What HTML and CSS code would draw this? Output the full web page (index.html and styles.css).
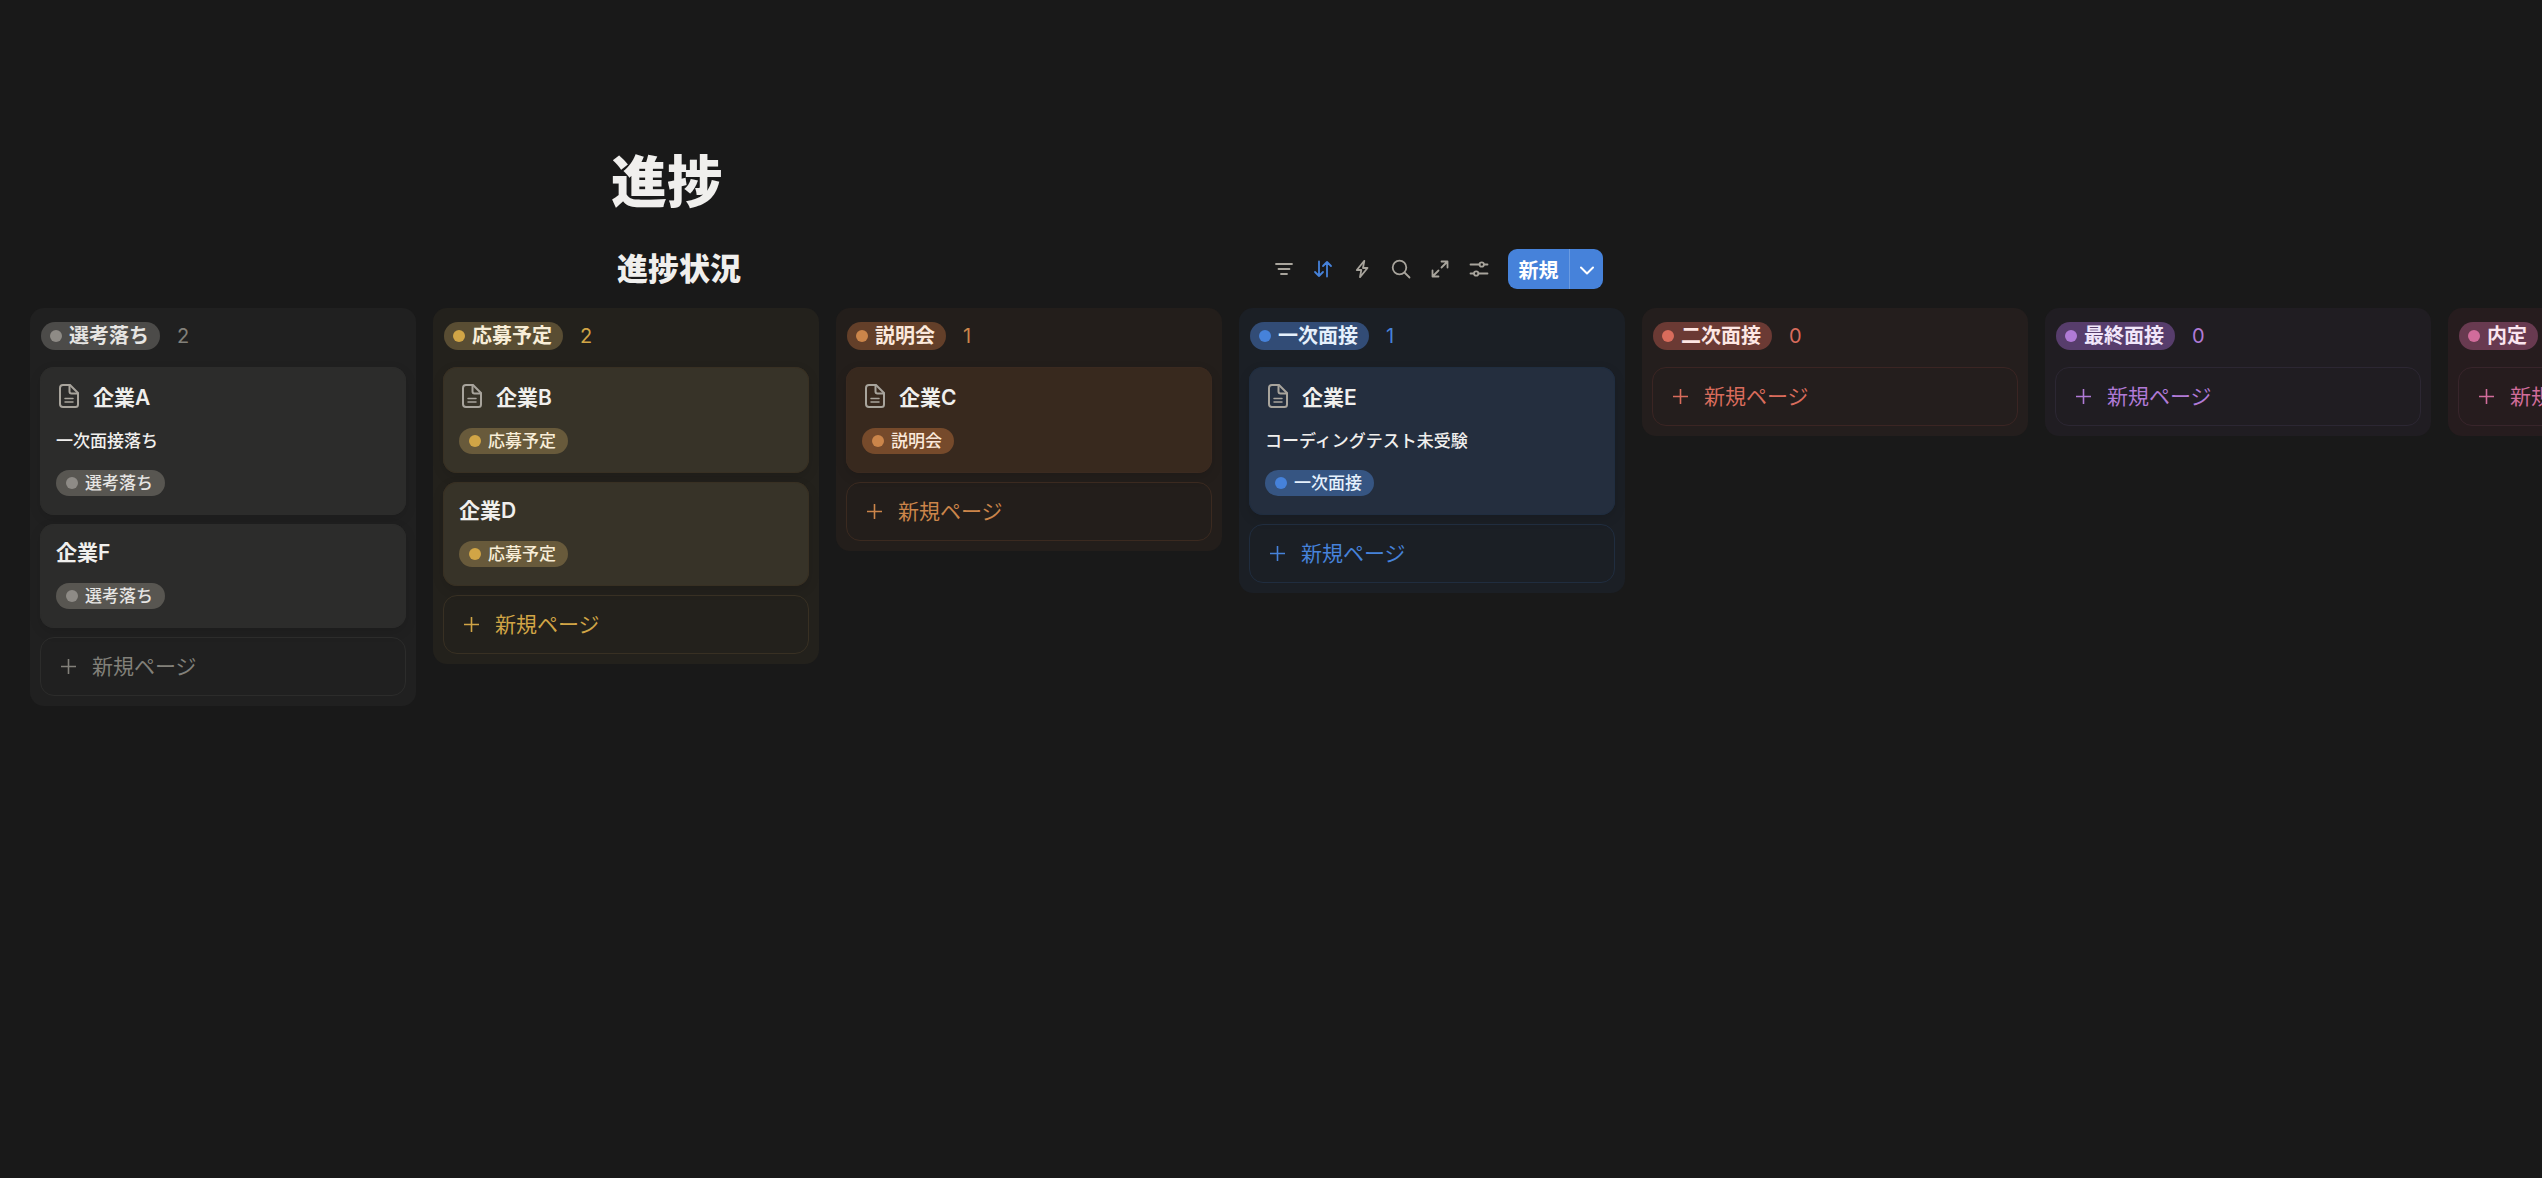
FILE: index.html
```html
<!DOCTYPE html>
<html lang="ja">
<head>
<meta charset="UTF-8" />
<meta name="viewport" content="width=device-width, initial-scale=1" />
<title>進捗</title>
<link rel="stylesheet" href="styles.css">
</head>
<body>

<!-- アイコン -->
<svg class="sprite" aria-hidden="true">
  <symbol id="icon-page" viewBox="0 0 20 24">
    <path d="M4 1h7l8 8v11.500a2.500 2.500 0 0 1-2.500 2.500h-12.500a3 3 0 0 1-3-3v-16a3 3 0 0 1 3-3z" stroke-width="2" />
    <path d="M10.500 1v6.500a2 2 0 0 0 2 2h6.500" stroke-width="2" />
    <path d="M6 14.500h8M6 18h8" stroke-width="1.500" />
  </symbol>
  <symbol id="icon-plus" viewBox="0 0 16 16">
    <path d="M8 .500v15M.500 8h15" stroke-width="1.700" />
  </symbol>
</svg>

<header class="page-header">
  <h1>進捗</h1>
  <div class="view-bar">
    <h2>進捗状況</h2>
    <div class="toolbar">
      <button type="button" class="icon-btn" aria-label="フィルター">
        <svg width="20" height="20" viewBox="0 0 20 20"><path d="M2 5h16M4.500 10h11M7 15h6" /></svg>
      </button>
      <button type="button" class="icon-btn active" aria-label="並べ替え">
        <svg width="20" height="20" viewBox="0 0 20 20"><path d="M6 2.500v14.500M2 13l4 4 4-4M14 17.500V3M10 7l4-4 4 4" /></svg>
      </button>
      <button type="button" class="icon-btn" aria-label="オートメーション">
        <svg width="20" height="20" viewBox="0 0 20 20"><path d="M12.300 1.800L4.800 11h4.500L8 18.200 15.500 9h-4.500z" /></svg>
      </button>
      <button type="button" class="icon-btn" aria-label="検索">
        <svg width="20" height="20" viewBox="0 0 20 20"><circle cx="8.500" cy="8.500" r="6.800" /><path d="M13.500 13.500L18.500 18.500" /></svg>
      </button>
      <button type="button" class="icon-btn" aria-label="拡大">
        <svg width="20" height="20" viewBox="0 0 20 20"><path d="M2.500 17.500l6-6M11.500 8.500l6-6M11.500 2.500h6v6M2.500 11.500v6h6" /></svg>
      </button>
      <button type="button" class="icon-btn" aria-label="設定">
        <svg width="20" height="20" viewBox="0 0 20 20"><path d="M1.500 5.500h9M15 5.500h3.500M1.500 14.500h3.500M9.500 14.500h9" /><circle cx="12.700" cy="5.500" r="2.200" /><circle cx="7.200" cy="14.500" r="2.200" /></svg>
      </button>
      <div class="new-group">
        <button type="button" class="new-btn">新規</button>
        <button type="button" class="new-menu" aria-label="メニュー">
          <svg width="14" height="10" viewBox="0 0 14 10"><path d="M1 1.500l6 6 6-6" /></svg>
        </button>
      </div>
    </div>
  </div>
</header>

<main class="board">

  <section class="column gray">
    <div class="column-head"><span class="pill">選考落ち</span><span class="count">2</span></div>
    <article class="card">
      <h3 class="with-icon"><svg class="page-icon"><use href="#icon-page" /></svg>企業A</h3>
      <p>一次面接落ち</p>
      <span class="tag">選考落ち</span>
    </article>
    <article class="card">
      <h3>企業F</h3>
      <span class="tag">選考落ち</span>
    </article>
    <button type="button" class="add"><svg class="plus"><use href="#icon-plus" /></svg>新規ページ</button>
  </section>

  <section class="column yellow">
    <div class="column-head"><span class="pill">応募予定</span><span class="count">2</span></div>
    <article class="card">
      <h3 class="with-icon"><svg class="page-icon"><use href="#icon-page" /></svg>企業B</h3>
      <span class="tag">応募予定</span>
    </article>
    <article class="card">
      <h3>企業D</h3>
      <span class="tag">応募予定</span>
    </article>
    <button type="button" class="add"><svg class="plus"><use href="#icon-plus" /></svg>新規ページ</button>
  </section>

  <section class="column orange">
    <div class="column-head"><span class="pill">説明会</span><span class="count">1</span></div>
    <article class="card">
      <h3 class="with-icon"><svg class="page-icon"><use href="#icon-page" /></svg>企業C</h3>
      <span class="tag">説明会</span>
    </article>
    <button type="button" class="add"><svg class="plus"><use href="#icon-plus" /></svg>新規ページ</button>
  </section>

  <section class="column blue">
    <div class="column-head"><span class="pill">一次面接</span><span class="count">1</span></div>
    <article class="card">
      <h3 class="with-icon"><svg class="page-icon"><use href="#icon-page" /></svg>企業E</h3>
      <p>コーディングテスト未受験</p>
      <span class="tag">一次面接</span>
    </article>
    <button type="button" class="add"><svg class="plus"><use href="#icon-plus" /></svg>新規ページ</button>
  </section>

  <section class="column red">
    <div class="column-head"><span class="pill">二次面接</span><span class="count">0</span></div>
    <button type="button" class="add"><svg class="plus"><use href="#icon-plus" /></svg>新規ページ</button>
  </section>

  <section class="column purple">
    <div class="column-head"><span class="pill">最終面接</span><span class="count">0</span></div>
    <button type="button" class="add"><svg class="plus"><use href="#icon-plus" /></svg>新規ページ</button>
  </section>

  <section class="column pink">
    <div class="column-head"><span class="pill">内定</span></div>
    <button type="button" class="add"><svg class="plus"><use href="#icon-plus" /></svg>新規ページ</button>
  </section>

</main>

</body>
</html>
```
FILE: styles.css
```css
* { box-sizing: border-box; }
body {
  margin: 0; padding-top: 148px; background: #191919; color: #f0efed;
  font-family: Inter, "Noto Sans CJK JP", sans-serif;
}
h1, h2, h3, p { margin: 0; }
button { font: inherit; border: none; padding: 0; background: none; cursor: pointer; }
svg { fill: none; stroke: currentColor; stroke-linecap: round; stroke-linejoin: round; flex-shrink: 0; }
.sprite { display: none; }

/* Header */
.page-header { margin-left: 24%; width: 993px; max-width: 76%; }
h1 { padding-left: 1px; font-size: 56px; line-height: 68px; font-weight: 800; }
.view-bar { display: flex; align-items: center; justify-content: space-between; margin-top: 33px; padding-left: 7px; }
h2 { font-size: 31px; line-height: 40px; font-weight: 800; }
.toolbar { display: flex; align-items: center; }
.icon-btn { display: flex; align-items: center; justify-content: center; width: 39px; height: 40px; color: #a8a49c; }
.icon-btn svg { stroke-width: 1.800; }
.icon-btn.active { color: #4682da; }
.new-group { display: flex; height: 40px; margin-left: 10px; border-radius: 9px; background: #4682da; overflow: hidden; }
.new-btn { width: 62px; border-right: 1px solid #6a9be1; color: #fff; font-size: 20px; font-weight: 600; }
.new-menu { display: flex; align-items: center; justify-content: center; width: 33px; color: #fff; }
.new-menu svg { margin-top: 3px; stroke-width: 2; }

/* Board */
.board { display: flex; align-items: flex-start; gap: 17px; margin-top: 19px; padding: 0 30px; overflow-x: auto; scrollbar-width: none; }
.column { display: flex; flex-direction: column; flex: 0 0 386px; gap: 9px; padding: 14px 10px 10px; border-radius: 14px; background: var(--bg); }
.column-head { display: flex; align-items: center; height: 28px; margin-bottom: 8px; padding-left: 1px; }
.pill, .tag { display: inline-flex; align-items: center; gap: 7px; color: var(--text); font-weight: 600; white-space: nowrap; }
.pill { height: 28px; padding: 0 11px 0 9px; border-radius: 14px; background: var(--pill); font-size: 20px; line-height: 28px; }
.tag { height: 26px; padding: 0 12px 0 10px; border-radius: 13px; background: var(--tag); font-size: 17px; line-height: 26px; font-weight: 500; }
.pill::before, .tag::before { content: ""; width: 12px; height: 12px; border-radius: 50%; background: var(--dot); }
.count { margin-left: 17px; color: var(--accent); font-size: 20px; line-height: 28px; }

.card { display: flex; flex-direction: column; align-items: flex-start; gap: 16px; padding: 15px 16px 19px; border-radius: 14px; background: var(--card); box-shadow: inset 0 0 0 1px var(--line), 0 4px 12px rgba(0, 0, 0, 0.12); }
h3 { display: flex; align-items: center; height: 28px; padding-bottom: 4px; font-size: 21px; font-weight: 600; }
h3.with-icon { height: 30px; gap: 14px; padding: 0 0 2px 3px; }
.page-icon { width: 20px; height: 24px; color: #a8a49c; }
.card p { font-size: 17px; line-height: 26px; font-weight: 500; }
.add { display: flex; align-items: center; height: 59px; gap: 16px; padding: 0 0 4px 20px; border: 1px solid var(--line); border-radius: 14px; color: var(--accent); font-size: 21px; }
.plus { width: 15px; height: 15px; margin-top: 3px; }

/* Column colours */
.gray { --bg: #202020; --card: #2c2c2b; --line: #2c2c2b; --pill: #4c4b49; --tag: #585651; --dot: #8e8b86; --accent: #82807a; --text: #e6e5e3; }
.yellow { --bg: #23211c; --card: #373328; --line: #383023; --pill: #594d33; --tag: #685a3b; --dot: #d1a546; --accent: #d1a546; --text: #f8eed8; }
.orange { --bg: #231e1b; --card: #38291e; --line: #3b2a20; --pill: #633f29; --tag: #764a2b; --dot: #cb854a; --accent: #cb854a; --text: #fbe9dc; }
.blue { --bg: #1b1f25; --card: #242e3e; --line: #202d3f; --pill: #324c76; --tag: #365582; --dot: #4682da; --accent: #4682da; --text: #e5f0fc; }
.red { --bg: #241e1d; --line: #3b2523; --pill: #6b3a34; --dot: #d96c5c; --accent: #d96c5c; --text: #fde6e3; }
.purple { --bg: #201d22; --line: #2c2733; --pill: #573d6c; --dot: #b07ad6; --accent: #b07ad6; --text: #f1e6fa; }
.pink { --bg: #261c1e; --line: #38252b; --pill: #683a50; --dot: #d16c9b; --accent: #d16c9b; --text: #fae5ef; }
```
